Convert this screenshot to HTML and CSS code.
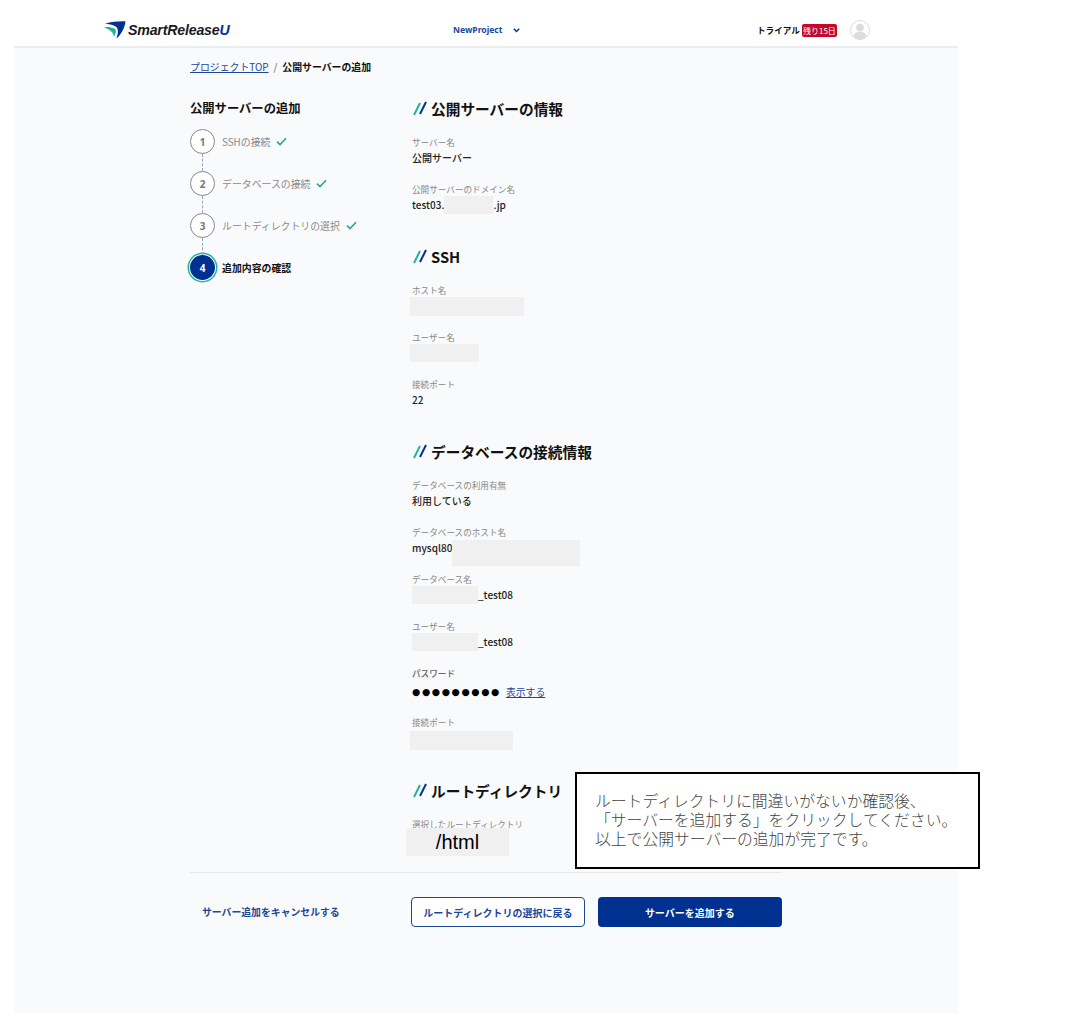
FILE: index.html
```html
<!DOCTYPE html>
<html lang="ja">
<head>
	<meta charset="UTF-8">
	<title>公開サーバーの追加</title>
	<link rel="stylesheet" href="styles.css">
</head>
<body>
	<div class="frame">
		<header class="topbar">
			<a class="logo">
				<svg class="logo-mark" width="22" height="18" viewBox="0 0 22 18">
					<path d="M1 2.8 C7 .9 15 .2 21.5 .4 C20.8 6.5 17.5 13 12.5 17.6 C14.6 11 14.4 7.2 11.6 5.4 C8.6 3.6 4.5 3 1 2.8 Z" fill="#003090"/>
					<path d="M.5 6.2 C4 5.8 8.5 6.4 10.8 7.8 C12.4 9 12.2 11.4 10 15.8 C9.4 12.4 7.2 10 4.6 8.6 C3.2 7.8 1.8 7 .5 6.2 Z" fill="#1fb59a"/>
				</svg>
				<span class="logo-text">SmartRelease<b>U</b></span>
			</a>
			<div class="project">NewProject
				<svg width="7" height="5" viewBox="0 0 7 5"><path d="M.8 .8 3.5 3.5 6.2 .8" fill="none" stroke="#003090" stroke-width="1.5"/></svg>
			</div>
			<div class="account">
				<span class="trial">トライアル</span>
				<span class="remain">残り15日</span>
				<svg class="avatar" width="20" height="20" viewBox="0 0 20 20">
					<circle cx="10" cy="10" r="9.5" fill="#fff" stroke="#dcdcdc"/>
					<circle cx="10" cy="7.6" r="3.9" fill="#dcdcdc"/>
					<path d="M3.4 16.2 C4.4 12.8 7 11.8 10 11.8 C13 11.8 15.6 12.8 16.6 16.2 C14.8 18.4 12.4 19.5 10 19.5 C7.6 19.5 5.2 18.4 3.4 16.2 Z" fill="#dcdcdc"/>
				</svg>
			</div>
		</header>

		<main class="page">
			<nav class="crumbs"><a href="#">プロジェクトTOP</a><i>/</i><b>公開サーバーの追加</b></nav>

			<div class="columns">
				<aside class="side">
					<h2>公開サーバーの追加</h2>
					<ol class="steps">
						<li class="step done"><span class="num">1</span>SSHの接続<svg class="check" width="11" height="9" viewBox="0 0 11 9"><path d="M1 4.6 4 7.6 10 1.2" fill="none" stroke="#1fa88f" stroke-width="1.5"/></svg></li>
						<li class="step done"><span class="num">2</span>データベースの接続<svg class="check" width="11" height="9" viewBox="0 0 11 9"><path d="M1 4.6 4 7.6 10 1.2" fill="none" stroke="#1fa88f" stroke-width="1.5"/></svg></li>
						<li class="step done"><span class="num">3</span>ルートディレクトリの選択<svg class="check" width="11" height="9" viewBox="0 0 11 9"><path d="M1 4.6 4 7.6 10 1.2" fill="none" stroke="#1fa88f" stroke-width="1.5"/></svg></li>
						<li class="step current"><span class="num">4</span>追加内容の確認</li>
					</ol>
				</aside>

				<section class="detail">
					<h3><svg width="16" height="16" viewBox="0 0 16 16"><path d="M2 15 8 3" stroke="#1fb59a" stroke-width="2"/><path d="M8 14 14 2" stroke="#003090" stroke-width="2"/></svg>公開サーバーの情報</h3>
					<div class="field"><label>サーバー名</label><p>公開サーバー</p></div>
					<div class="field"><label>公開サーバーのドメイン名</label><p>test03.<span class="mask mask-domain"></span>.jp</p></div>

					<h3><svg width="16" height="16" viewBox="0 0 16 16"><path d="M2 15 8 3" stroke="#1fb59a" stroke-width="2"/><path d="M8 14 14 2" stroke="#003090" stroke-width="2"/></svg>SSH</h3>
					<div class="field"><label>ホスト名</label><p><span class="mask mask-host"></span></p></div>
					<div class="field"><label>ユーザー名</label><p><span class="mask mask-user"></span></p></div>
					<div class="field"><label>接続ポート</label><p>22</p></div>

					<h3><svg width="16" height="16" viewBox="0 0 16 16"><path d="M2 15 8 3" stroke="#1fb59a" stroke-width="2"/><path d="M8 14 14 2" stroke="#003090" stroke-width="2"/></svg>データベースの接続情報</h3>
					<div class="field"><label>データベースの利用有無</label><p>利用している</p></div>
					<div class="field"><label>データベースのホスト名</label><p>mysql80<span class="mask mask-dbhost"></span></p></div>
					<div class="field"><label>データベース名</label><p><span class="mask mask-dbname"></span>_test08</p></div>
					<div class="field"><label>ユーザー名</label><p><span class="mask mask-dbname"></span>_test08</p></div>
					<div class="field field-pass"><label class="strong">パスワード</label><p class="pass"><span class="dots">●●●●●●●●●</span><a href="#">表示する</a></p></div>
					<div class="field"><label>接続ポート</label><p><span class="mask mask-port"></span></p></div>

					<h3 class="root-head"><svg width="16" height="16" viewBox="0 0 16 16"><path d="M2 15 8 3" stroke="#1fb59a" stroke-width="2"/><path d="M8 14 14 2" stroke="#003090" stroke-width="2"/></svg>ルートディレクトリ</h3>
					<div class="field"><label>選択したルートディレクトリ</label><p><span class="mask mask-root">/html</span></p></div>
				</section>
			</div>

			<footer class="actions">
				<a class="cancel" href="#">サーバー追加をキャンセルする</a>
				<button class="btn btn-back">ルートディレクトリの選択に戻る</button>
				<button class="btn btn-add">サーバーを追加する</button>
			</footer>
		</main>

		<div class="note">ルートディレクトリに間違いがないか確認後、<br>「サーバーを追加する」をクリックしてください。<br>以上で公開サーバーの追加が完了です。</div>
	</div>
</body>
</html>
```

FILE: styles.css
```css
* {
	box-sizing: border-box;
}
body {
	margin: 0;
	background-color: #fff;
	color: #111;
	font-family: "Noto Sans CJK JP", "Noto Sans", sans-serif;
}
.frame {
	position: relative;
	width: 944px;
	height: 1013px;
	margin-left: 14px;
	background-color: #f9fafb;
}

/* header */
.topbar {
	display: flex;
	align-items: center;
	height: 48px;
	padding: 14px 0 0 90px;
	background-color: #fff;
	border-bottom: 2px solid #ececec;
}
.logo {
	display: flex;
	align-items: center;
	width: 349px;
}
.logo-mark {
	margin-right: 2px;
}
.logo-text {
	color: #1a1a22;
	font-family: "Liberation Sans", sans-serif;
	font-size: 14.2px;
	font-style: italic;
	font-weight: 700;
	letter-spacing: -.2px;
}
.logo-text b {
	color: #003090;
}
.project {
	display: flex;
	align-items: center;
	gap: 10px;
	width: 304px;
	color: #1d4798;
	font-family: "Noto Sans", sans-serif;
	font-size: 8.6px;
	font-weight: 700;
}
.account {
	display: flex;
	align-items: center;
}
.trial {
	margin-right: 2px;
	font-size: 8.6px;
	font-weight: 700;
}
.remain {
	width: 35px;
	height: 13px;
	margin-right: 13px;
	background-color: #c4072c;
	border-radius: 2px;
	color: #fff;
	font-size: 8px;
	line-height: 13px;
	text-align: center;
}

/* page */
.page {
	padding: 10px 176px 0;
}
.crumbs {
	display: flex;
	align-items: center;
	height: 17px;
	font-size: 9.9px;
	font-weight: 500;
}
.crumbs a {
	color: #1d4798;
	font-weight: 400;
}
.crumbs i {
	margin: 0 5px;
	color: #777;
	font-style: normal;
}
.crumbs b {
	font-weight: 700;
}
.columns {
	display: flex;
}
.side {
	width: 222px;
	padding-top: 24px;
}
.side h2 {
	margin: 0 0 12px;
	font-size: 12.3px;
	font-weight: 700;
	line-height: 18px;
}
.steps {
	margin: 0;
	padding: 0;
	list-style: none;
}
.step {
	position: relative;
	display: flex;
	align-items: center;
	height: 25px;
	margin-bottom: 17px;
	color: #8a8a8a;
	font-size: 9.9px;
}
.step + .step::before {
	content: "";
	position: absolute;
	left: 12px;
	top: -17px;
	height: 17px;
	border-left: 1px dashed #9aa6c8;
}
.num {
	display: flex;
	align-items: center;
	justify-content: center;
	width: 25px;
	height: 25px;
	margin-right: 7px;
	background-color: #fff;
	border: 1px solid #888;
	border-radius: 50%;
	color: #777;
	font-family: "Noto Sans", sans-serif;
	font-size: 10px;
	font-weight: 700;
}
.check {
	margin-left: 6px;
}
.current {
	color: #111;
	font-weight: 700;
}
.current .num {
	background-color: #003090;
	border: 0;
	box-shadow: 0 0 0 1px #fff, 0 0 0 2.5px #1fb59a;
	color: #fff;
}

/* detail */
.detail {
	width: 370px;
	padding-top: 23px;
}
.detail h3 {
	display: flex;
	align-items: center;
	gap: 3px;
	height: 20px;
	margin: 0 0 17px;
	font-size: 14.7px;
	font-weight: 700;
}
.detail .field + h3 {
	margin-top: 17px;
}
.detail .field + h3.root-head {
	margin-top: 18px;
}
.field {
	height: 47px;
}
.field-pass {
	height: 49px;
}
.field label {
	display: block;
	height: 14px;
	color: #888;
	font-size: 8.6px;
	line-height: 14px;
}
.field label.strong {
	color: #666;
	font-weight: 500;
}
.field p {
	margin: 0;
	color: #222;
	font-size: 10px;
	font-weight: 500;
	line-height: 18px;
	white-space: nowrap;
}
.mask {
	display: inline-block;
	background-color: #f0f0f0;
	vertical-align: top;
}
.mask-domain {
	width: 49px;
	height: 18px;
}
.mask-host {
	width: 114px;
	height: 19px;
	margin-left: -2px;
}
.mask-user {
	width: 69px;
	height: 18px;
	margin-left: -2px;
}
.mask-dbhost {
	width: 128px;
	height: 26px;
	margin-top: 1px;
}
.mask-dbname {
	width: 66px;
	height: 18px;
}
.mask-port {
	width: 103px;
	height: 19px;
	margin: 2px 0 0 -2px;
}
.mask-root {
	width: 103px;
	height: 28px;
	margin: -3px 0 0 -6px;
	color: #000;
	font-family: "Liberation Sans", sans-serif;
	font-size: 20px;
	font-weight: 400;
	line-height: 28px;
	text-align: center;
}
.field .pass {
	display: flex;
	align-items: center;
	margin-top: 3px;
}
.dots {
	margin-right: 5px;
	color: #000;
	font-family: "DejaVu Sans", sans-serif;
	font-size: 9.5px;
	letter-spacing: 1.6px;
}
.pass a {
	color: #1d4798;
	font-size: 9.8px;
	font-weight: 400;
}

/* footer */
.actions {
	display: flex;
	align-items: center;
	gap: 13px;
	width: 592px;
	margin-top: 8px;
	padding-top: 24px;
	border-top: 1px solid #e8e8e8;
}
.cancel {
	width: 208px;
	padding-left: 12px;
	color: #1d4798;
	font-size: 9.85px;
	font-weight: 700;
	text-decoration: none;
}
.btn {
	height: 30px;
	border-radius: 4px;
	font-family: inherit;
	font-size: 10px;
	font-weight: 700;
}
.btn-back {
	width: 174px;
	margin-left: 1px;
	background-color: #fff;
	border: 1px solid #1d4798;
	color: #1d4798;
}
.btn-add {
	width: 185px;
	background-color: #003090;
	border: 0;
	color: #fff;
}

/* callout laid over the page */
.note {
	position: absolute;
	left: 561px;
	top: 772px;
	width: 405px;
	height: 97px;
	padding: 17px 0 0 18px;
	background-color: #fff;
	border: 2px solid #000;
	color: #444;
	font-family: "Noto Sans CJK JP", sans-serif;
	font-size: 15.8px;
	font-weight: 300;
	line-height: 19px;
	white-space: nowrap;
}
```
